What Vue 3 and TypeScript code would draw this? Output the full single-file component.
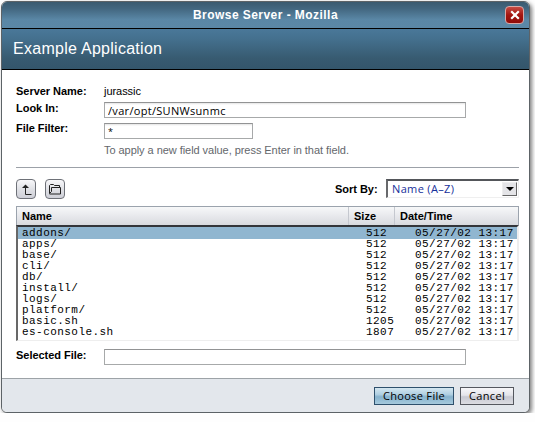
<script setup lang="ts">
import { ref } from 'vue'

interface Entry { name: string; size: string; date: string }

const lookIn = ref('/var/opt/SUNWsunmc')
const filter = ref('*')
const selectedFile = ref('')
const selected = ref(0)

const stamp = '05/27/02 13:17'
const entries: Entry[] = [
  ...['addons/', 'apps/', 'base/', 'cli/', 'db/', 'install/', 'logs/', 'platform/'].map(
    (name) => ({ name, size: '512', date: stamp }),
  ),
  { name: 'basic.sh', size: '1205', date: stamp },
  { name: 'es-console.sh', size: '1807', date: stamp },
]
</script>

<template>
  <div class="window">
    <div class="titlebar">
      <span class="title">Browse Server - Mozilla</span>
      <button class="close" aria-label="Close">
        <svg width="10" height="10" viewBox="0 0 10 10"><path d="M1.2 1.2 8.8 8.8M8.8 1.2 1.2 8.8" stroke="#fff" stroke-width="2.2" /></svg>
      </button>
    </div>
    <header class="masthead"><span>Example Application</span></header>

    <main class="content">
      <div class="field server">
        <span class="label l-server">Server Name:</span><span class="value">jurassic</span>
      </div>
      <div class="field look">
        <label class="label l-look" for="look">Look In:</label>
        <input id="look" v-model="lookIn" class="input wide" />
      </div>
      <div class="field filter">
        <label class="label l-filter" for="filter">File Filter:</label>
        <input id="filter" v-model="filter" class="input narrow" />
      </div>
      <p class="hint">To apply a new field value, press Enter in that field.</p>

      <div class="toolbar">
        <button class="tool" aria-label="Up one level">
          <svg width="18" height="18" viewBox="0 0 18 18"><path d="M8.500 6v8.500h6" fill="none" stroke="#222" /><path d="M8.500 4.500 12 8H5z" fill="#222" /></svg>
        </button>
        <button class="tool" aria-label="Open folder">
          <svg width="18" height="18" viewBox="0 0 18 18" fill="none" stroke="#222"><path d="M3.500 13.500v-8l1-1h3l1 1h5v2M3.500 13.500l2-2v-4h9v6.500h-11" /></svg>
        </button>
        <span class="label sort-label">Sort By:</span>
        <div class="select">
          <span class="choice">Name (A–Z)</span>
          <i class="arrow"><svg width="8" height="4" viewBox="0 0 8 4"><path d="M0 0h8L4 4z" fill="#000" /></svg></i>
        </div>
      </div>

      <div class="table">
        <div class="thead">
          <span class="th name">Name</span><span class="th size">Size</span><span class="th date">Date/Time</span>
        </div>
        <div class="list">
          <div
            v-for="(e, i) in entries"
            :key="e.name"
            class="row"
            :class="{ active: i === selected }"
            @click="selected = i"
          >
            <span class="c-name">{{ e.name }}</span><span class="c-size">{{ e.size }}</span><span>{{ e.date }}</span>
          </div>
        </div>
      </div>

      <div class="field chosen">
        <label class="label l-chosen" for="chosen">Selected File:</label>
        <input id="chosen" v-model="selectedFile" class="input wide plain" />
      </div>
    </main>

    <footer class="footer">
      <button class="btn primary">Choose File</button>
      <button class="btn">Cancel</button>
    </footer>
  </div>
</template>

<style>
body { background: #fefefe; overflow: hidden; }
</style>

<style scoped>
* { box-sizing: border-box; }
button { padding: 0; margin: 0; }
.window {
  width: 529px;
  height: 412px;
  margin: 1px 0 0 1px;
  border: 1px solid #5d6367;
  border-radius: 6px;
  overflow: hidden;
  background: #fff;
  box-shadow: 2px 2px 4px rgba(0, 0, 0, 0.5);
  font: 11px/14px "Liberation Sans", Arial, sans-serif;
  color: #000;
  display: flex;
  flex-direction: column;
}
.titlebar {
  height: 27px;
  flex: none;
  display: grid;
  grid-template-columns: 30px 1fr 30px;
  align-items: center;
  border-bottom: 1px solid #000;
  background: linear-gradient(#3a5a6f 0, #42667f 25%, #5a87a6 68%, #5b88a7 100%);
}
.title {
  grid-column: 2;
  text-align: center;
  color: #fff;
  font-size: 12px;
  font-weight: bold;
  letter-spacing: 0.45px;
}
.close {
  width: 19px;
  height: 18px;
  margin-left: 6px;
  border: 1px solid #d9a8a6;
  border-radius: 4px;
  background: linear-gradient(#c64b43, #a31510 50%, #8f0b08);
  display: grid;
  place-items: center;
}
.masthead {
  height: 41px;
  flex: none;
  padding: 0 0 1px 11px;
  display: flex;
  align-items: center;
  color: #fff;
  font-size: 16px;
  letter-spacing: 0.27px;
  border-bottom: 1px solid #000;
  background: linear-gradient(#4a7899 0, #44708e 25%, #375a70 75%, #34566b 100%);
}
.content { flex: 1; padding: 14px 0 0 14px; }
.field { display: flex; height: 16px; }
.label { width: 88px; font-weight: bold; white-space: nowrap; letter-spacing: -0.03px; }
.server { height: 18px; }
.value { letter-spacing: -0.05px; }
.filter { margin-top: 5px; }
.look .label { margin-top: -1px; }
.filter .label { margin-top: -2px; }
.input {
  height: 16px;
  padding: 1px 3px 1px;
  border: 1px solid #a7a9aa;
  border-top-color: #929394;
  border-radius: 0;
  background: linear-gradient(#e4e4e4, #fff 2px);
  font: 11px/12px "Open Sans", "Noto Sans", sans-serif;
  letter-spacing: 0.31px;
  color: #000;
  outline: none;
}
.input.narrow { font-size: 9px; }
.input.plain { background: #fff; }
.wide { width: 362px; }
.narrow { width: 149px; }
.hint {
  margin: 4px 0 0 88px;
  height: 24px;
  color: #64676c;
  letter-spacing: -0.05px;
}
.toolbar {
  width: 503px;
  height: 39px;
  padding-top: 11px;
  border-top: 1px solid #9ca1a8;
  display: flex;
}
.tool {
  width: 20px;
  height: 20px;
  margin-right: 9px;
  border: 1px solid #6e7178;
  border-radius: 4px;
  background: linear-gradient(#f8f8fa, #e0e1e6 50%, #cfd0d8);
  display: grid;
  place-items: center;
}
.sort-label { width: 51px; margin: 3px 0 0 auto; }
.select {
  width: 133px;
  height: 19px;
  border: solid #efefef;
  border-width: 2px 1px 1px 2px;
  border-top-color: #53565a;
  border-left-color: #68696c;
  display: flex;
  justify-content: space-between;
  align-items: center;
  padding: 0 1px 0 4px;
  font: 11px/14px "Open Sans", "Noto Sans", sans-serif;
  letter-spacing: 0.35px;
  color: #15309a;
}
.arrow {
  width: 15px;
  height: 14px;
  border: 1px solid;
  border-color: #eee #666 #666 #eee;
  background: #e4e4e7;
  display: grid;
  place-items: center;
}
.table { width: 503px; height: 135px; }
.thead {
  height: 19px;
  display: flex;
  border: 1px solid #9ba3ad;
  border-bottom: 0;
  background: linear-gradient(#f7f8f9, #e6e7eb 55%, #d8dade);
  font-weight: bold;
  line-height: 19px;
}
.th { padding-left: 5px; }
.th + .th { border-left: 1px solid #c5c8cf; }
.name { width: 331px; }
.size { width: 46px; }
.date { flex: 1; }
.list {
  height: 116px;
  border: solid #eee;
  border-width: 2px 2px 1px 2px;
  border-top-color: #333539;
  border-left-color: #686868;
  font: 11px/11px "Liberation Mono", "Courier New", monospace;
  letter-spacing: 0.45px;
}
.row { height: 11px; display: flex; padding-left: 4px; white-space: pre; }
.row.active { height: 12px; padding-top: 1px; background: #90b6d0; }
.c-name { width: 344px; }
.c-size { width: 49px; }
.chosen { margin-top: 8px; }
.l-chosen { margin-top: -1px; }
.footer {
  height: 34px;
  flex: none;
  padding: 8px 15px 0 0;
  display: flex;
  justify-content: flex-end;
  gap: 6px;
  border-top: 1px solid #9da3a7;
  background: #e3e7ec;
}
.btn {
  width: 54px;
  height: 18px;
  border: 1px solid #55585f;
  background: linear-gradient(#f7f7f9, #e5e5ea 45%, #c8c9d2 55%, #dcdde2);
  font: 11px/14px "Open Sans", "Noto Sans", sans-serif;
  letter-spacing: 0.33px;
  color: #000;
}
.primary {
  width: 80px;
  border-color: #2e506c;
  background: linear-gradient(#d4e6f0, #b0d0e2 40%, #86b2cd 55%, #a6cadd);
}
</style>
